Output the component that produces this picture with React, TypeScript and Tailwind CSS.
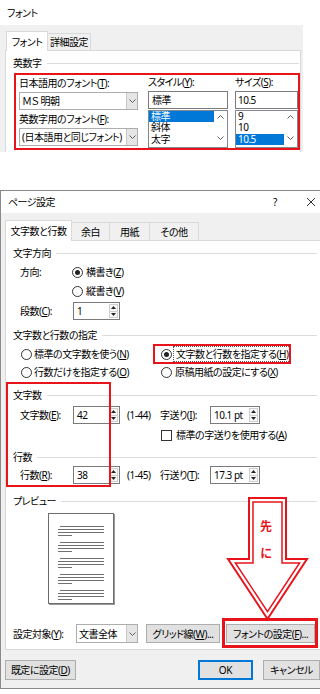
import React from 'react';

const U: React.FC<{ c: string }> = ({ c }) => (
  <span className="underline underline-offset-[1px]">{c}</span>
);

function Chevron({ up = false }: { up?: boolean }) {
  return (
    <svg width="7" height="4" viewBox="0 0 7 4">
      <path d={up ? 'M0.5 3.5 L3.5 0.5 L6.5 3.5' : 'M0.5 0.5 L3.5 3.5 L6.5 0.5'} fill="none" stroke="#606060" strokeWidth="1" />
    </svg>
  );
}

function Tri({ up = false }: { up?: boolean }) {
  return (
    <svg width="5" height="3" viewBox="0 0 5 3">
      <path d={up ? 'M0 3 L2.5 0 L5 3 Z' : 'M0 0 L5 0 L2.5 3 Z'} fill="#222" />
    </svg>
  );
}

function Spin({ value, w }: { value: string; w: string }) {
  return (
    <div className={`flex h-[18px] border border-[#7a7a7a] bg-white ${w}`}>
      <div className="flex-1 flex items-center pl-[3px]">{value}</div>
      <div className="w-[9px] my-[1px] mr-[1px] flex flex-col border border-[#cfcfcf] bg-[#f7f7f7]">
        <div className="flex-1 flex items-center justify-center border-b border-[#cfcfcf]"><Tri up /></div>
        <div className="flex-1 flex items-center justify-center"><Tri /></div>
      </div>
    </div>
  );
}

function Combo({ value, w, h }: { value: string; w: string; h: string }) {
  return (
    <div className={`flex border border-[#adadad] bg-white ${w} ${h}`}>
      <div className="flex-1 flex items-center pl-[2px] overflow-hidden">{value}</div>
      <div className="w-[11px] bg-[#e5e5e5] border-l border-[#c8c8c8] flex items-center justify-center"><Chevron /></div>
    </div>
  );
}

function ListBox({ items, sel }: { items: string[]; sel: number }) {
  return (
    <div className="mt-[1px] h-[40px] flex border border-[#828790] bg-white">
      <div className="flex-1">
        {items.map((t, i) => (
          <div key={t} className={`h-[11.5px] leading-[11px] flex items-center pl-[2px] ${i === sel ? 'bg-[#0078d7] text-white' : ''}`}>{t}</div>
        ))}
      </div>
      <div className="w-[13px] flex flex-col items-center justify-between pt-[4px] pb-[7px]">
        <Chevron up />
        <Chevron />
      </div>
    </div>
  );
}

function Group({ label, className = '' }: { label: string; className?: string }) {
  return (
    <div className={`flex items-center h-[14px] ${className}`}>
      <span>{label}</span>
      <div className="flex-1 h-px bg-[#dcdcdc] ml-[5px]" />
    </div>
  );
}

function Radio({ on = false }: { on?: boolean }) {
  return (
    <span className="w-[11px] h-[11px] shrink-0 rounded-full border border-[#333] bg-white flex items-center justify-center">
      {on && <span className="w-[5px] h-[5px] rounded-full bg-[#222]" />}
    </span>
  );
}

function Btn({ children, w }: { children: React.ReactNode; w: string }) {
  return (
    <div className={`h-full flex items-center justify-center bg-[#e1e1e1] border border-[#adadad] ${w}`}>{children}</div>
  );
}

function Preview() {
  const groups = [13, 29, 45, 61, 77];
  return (
    <div className="ml-[35px] mt-[5px] w-[66px] h-[91px] bg-white border border-[#6d6d6d] shadow-[1px_1px_0_#9a9a9a]">
      <svg width="64" height="89" viewBox="0 0 64 89">
        {groups.map((y) => (
          <g key={y} fill="#707070">
            <rect x="11" y={y - 1} width="44" height="1" />
            <rect x="9" y={y + 2} width="46" height="1" />
            <rect x="9" y={y + 5} width="46" height="1" />
            <rect x="9" y={y + 8} width="14" height="1" />
          </g>
        ))}
      </svg>
    </div>
  );
}

function Arrow() {
  return (
    <div className="absolute left-[226px] top-[496px] w-[84px] h-[126px]">
      <svg width="84" height="126" viewBox="0 0 84 126">
        <polygon points="23,2 60,2 60,63 81,63 41.5,123 2,63 23,63" fill="#fff" stroke="#e8141c" strokeWidth="2" />
        <polygon points="27,6 56,6 56,67 73.6,67 41.5,115.7 9.4,67 27,67" fill="#fff" stroke="#e8141c" strokeWidth="1.5" />
      </svg>
      <div className="absolute left-[33px] top-[24px] w-[14px] text-center text-[12px] leading-[14px] tracking-normal font-bold text-[#e8141c]">先</div>
      <div className="absolute left-[33px] top-[51px] w-[14px] text-center text-[12px] leading-[14px] tracking-normal font-bold text-[#e8141c]">に</div>
    </div>
  );
}

export default function App() {
  return (
    <div className="relative w-[320px] h-[694px] overflow-hidden bg-white text-[10px] leading-[14px] tracking-[-0.5px] whitespace-nowrap text-black [font-family:'Noto_Sans','Noto_Sans_CJK_JP',sans-serif] [font-feature-settings:'palt']">
      {/* フォント dialog */}
      <div className="w-[303px] h-[152px] flex flex-col">
        <div className="h-[25px] bg-white flex items-center pl-[7px]">フォント</div>
        <div className="flex-1 bg-[#f0f0f0] flex flex-col overflow-hidden">
          <div className="h-[25px] flex items-end pl-[6px]">
            <div className="relative z-10 w-[42px] h-[20px] -mb-px bg-white border border-b-0 border-[#d9d9d9] flex items-center justify-center">フォント</div>
            <div className="w-[43px] h-[17px] border border-b-0 border-l-0 border-[#d9d9d9] flex items-center justify-center">詳細設定</div>
          </div>
          <div className="ml-[5px] w-[296px] flex-1 bg-white border border-b-0 border-[#d9d9d9]">
            <div className="pl-[7px] pr-[1px]">
              <Group label="英数字" className="mt-[5px]" />
            </div>
            <div className="mt-[3px] ml-[8px] w-[286px] h-[77px] border-2 border-[#e8141c] flex overflow-hidden">
              <div className="ml-[3px] w-[119px] flex flex-col">
                <div className="h-[15px] mb-[2px] flex items-center">日本語用のフォント(<U c="T" />):</div>
                <Combo value="ＭＳ 明朝" w="w-full" h="h-[18px]" />
                <div className="h-[18px] flex items-center">英数字用のフォント(<U c="F" />):</div>
                <Combo value="(日本語用と同じフォント)" w="w-full" h="h-[18px]" />
              </div>
              <div className="ml-[10px] w-[80px] flex flex-col">
                <div className="h-[15px] mb-[2px] flex items-center">スタイル(<U c="Y" />):</div>
                <div className="h-[18px] border border-[#7a7a7a] flex items-center pl-[3px]">標準</div>
                <ListBox items={['標準', '斜体', '太字']} sel={0} />
              </div>
              <div className="ml-[7px] w-[63px] flex flex-col">
                <div className="h-[15px] mb-[2px] flex items-center">サイズ(<U c="S" />):</div>
                <div className="h-[18px] border border-[#7a7a7a] flex items-center pl-[2px]">10.5</div>
                <ListBox items={['9', '10', '10.5']} sel={2} />
              </div>
            </div>
          </div>
        </div>
      </div>

      {/* ページ設定 dialog */}
      <div className="mt-[38px] w-[320px] h-[499px] border-t border-b border-l border-[#8a8a8a] flex flex-col overflow-hidden">
        <div className="h-[22px] bg-white flex items-center pl-[7px]">
          <span>ページ設定</span>
          <span className="ml-auto mr-[26px] w-[10px] text-center">?</span>
          <svg width="10" height="10" viewBox="0 0 10 10" className="mr-[4px]">
            <path d="M1 1 L9 9 M9 1 L1 9" stroke="#333" strokeWidth="1" />
          </svg>
        </div>
        <div className="flex-1 bg-[#f0f0f0] flex flex-col">
          <div className="h-[27px] flex items-end pl-[4px]">
            <div className="relative z-10 w-[67px] h-[21px] -mb-px bg-white border border-b-0 border-[#d9d9d9] flex items-center justify-center">文字数と行数</div>
            <div className="w-[38px] h-[18px] border-t border-r border-[#d9d9d9] flex items-center justify-center">余白</div>
            <div className="w-[40px] h-[18px] border-t border-r border-[#d9d9d9] flex items-center justify-center">用紙</div>
            <div className="w-[49px] h-[18px] border-t border-r border-[#d9d9d9] flex items-center justify-center">その他</div>
          </div>
          <div className="ml-[4px] w-[330px] h-[410px] bg-white border border-[#d9d9d9]">
            <div className="pl-[7px] w-[311px]">
              <Group label="文字方向" className="mt-[5px]" />
              <div className="mt-[3px] h-[18px] ml-[7px] flex items-center">
                <span className="w-[52px]">方向:</span>
                <Radio on />
                <span className="ml-[3px]">横書き(<U c="Z" />)</span>
              </div>
              <div className="mt-[1px] h-[18px] ml-[59px] flex items-center">
                <Radio />
                <span className="ml-[3px]">縦書き(<U c="V" />)</span>
              </div>
              <div className="mt-[2px] h-[18px] ml-[7px] flex items-center">
                <span className="w-[53px]">段数(<U c="C" />):</span>
                <Spin value="1" w="w-[47px]" />
              </div>

              <Group label="文字数と行数の指定" className="mt-[8px]" />
              <div className="mt-[3px] h-[18px] flex items-center">
                <div className="ml-[8px] w-[140px] flex items-center">
                  <Radio />
                  <span className="ml-[2px]">標準の文字数を使う(<U c="N" />)</span>
                </div>
                <Radio on />
                <span className="ml-[1px] px-[2px] border border-dotted border-[#555]">文字数と行数を指定する(<U c="H" />)</span>
              </div>
              <div className="h-[18px] flex items-center">
                <div className="ml-[8px] w-[140px] flex items-center">
                  <Radio />
                  <span className="ml-[2px]">行数だけを指定する(<U c="O" />)</span>
                </div>
                <Radio />
                <span className="ml-[3px]">原稿用紙の設定にする(<U c="X" />)</span>
              </div>

              <Group label="文字数" className="mt-[7px]" />
              <div className="mt-[4px] h-[18px] ml-[7px] flex items-center">
                <span className="w-[53px]">文字数(<U c="E" />):</span>
                <Spin value="42" w="w-[47px]" />
                <span className="ml-[7px] w-[33px]">(1-44)</span>
                <span className="w-[50px]">字送り(<U c="I" />):</span>
                <Spin value="10.1 pt" w="w-[50px]" />
              </div>
              <div className="mt-[2px] h-[18px] ml-[148px] flex items-center">
                <span className="w-[11px] h-[11px] border border-[#333] bg-white" />
                <span className="ml-[4px]">標準の字送りを使用する(<U c="A" />)</span>
              </div>

              <Group label="行数" className="mt-[6px]" />
              <div className="mt-[2px] h-[18px] ml-[7px] flex items-center">
                <span className="w-[53px]">行数(<U c="R" />):</span>
                <Spin value="38" w="w-[47px]" />
                <span className="ml-[7px] w-[33px]">(1-45)</span>
                <span className="w-[50px]">行送り(<U c="T" />):</span>
                <Spin value="17.3 pt" w="w-[50px]" />
              </div>

              <Group label="プレビュー" className="mt-[10px]" />
              <Preview />

              <div className="mt-[20px] h-[19px] flex items-center">
                <span className="w-[63px]">設定対象(<U c="Y" />):</span>
                <Combo value="文書全体" w="w-[62px]" h="h-[19px]" />
                <div className="ml-[8px] h-full"><Btn w="w-[74px]">グリッド線(<U c="W" />)...</Btn></div>
                <div className="ml-[6px] h-full"><Btn w="w-[89px]">フォントの設定(<U c="F" />)...</Btn></div>
              </div>
            </div>
          </div>
          <div className="mt-[10px] h-[20px] pl-[4px] flex">
            <Btn w="w-[73px]">既定に設定(<U c="D" />)</Btn>
            <div className="ml-[122px] w-[57px] h-full flex items-center justify-center bg-[#e1e1e1] border-2 border-[#0078d7]">OK</div>
            <div className="ml-[10px] h-full"><Btn w="w-[57px]">キャンセル</Btn></div>
          </div>
        </div>
      </div>

      {/* annotations */}
      <div className="absolute left-[153px] top-[344px] w-[138px] h-[20px] border-2 border-[#e8141c]" />
      <div className="absolute left-[6px] top-[382px] w-[105px] h-[105px] border-2 border-[#e8141c]" />
      <div className="absolute left-[222px] top-[618px] w-[96px] h-[30px] border-[3px] border-[#e8141c]" />
      <Arrow />
    </div>
  );
}
